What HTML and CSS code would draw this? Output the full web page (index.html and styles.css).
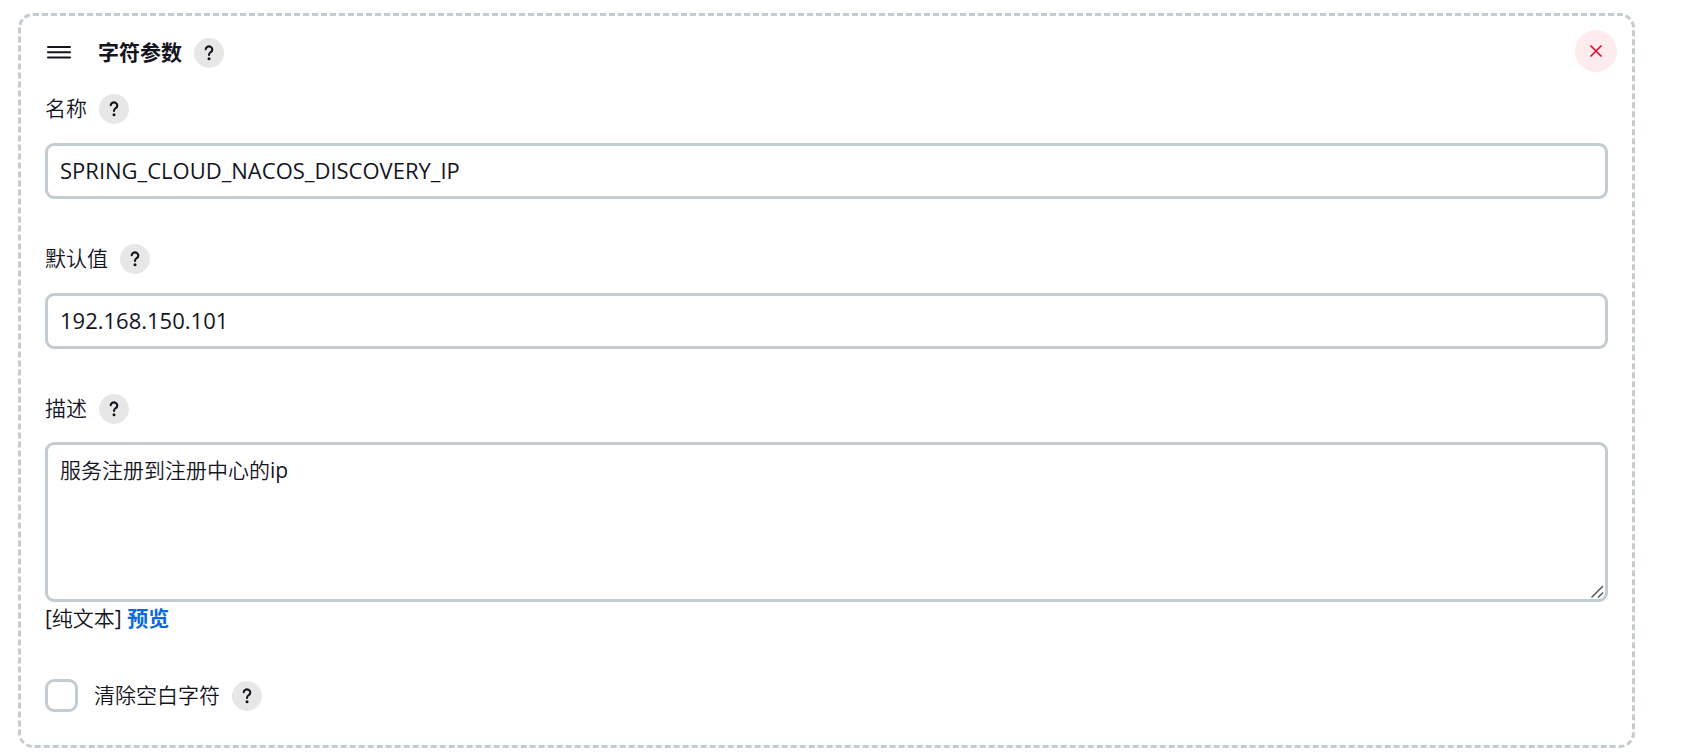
FILE: index.html
```html
<!DOCTYPE html>
<html lang="zh-CN">
<head>
    <meta charset="UTF-8">
    <meta name="viewport" content="width=device-width, initial-scale=1.0">
    <title>字符参数</title>
    <link rel="stylesheet" href="styles.css">
</head>
<body>
    <form class="parameter">
        <div class="parameter-header">
            <div class="parameter-title">
                <svg class="drag-handle" viewBox="0 0 24 14" aria-hidden="true">
                    <path d="M1 1h22M1 6.250h22M1 11.500h22" />
                </svg>
                <h2>字符参数</h2>
                <button type="button" class="help" aria-label="字符参数 帮助">
                    <svg viewBox="0 0 10 16" aria-hidden="true"><path d="M1.7 4.300a3.3 3 0 1 1 5 2.700C5.5 7.800 5 8.400 5 10" /><circle cx="5" cy="13.700" r="1.500" /></svg>
                </button>
            </div>
            <button type="button" class="delete" aria-label="删除">
                <svg viewBox="0 0 12 12" aria-hidden="true"><path d="M.5.5l11 11M11.500.5l-11 11" /></svg>
            </button>
        </div>

        <div class="field">
            <div class="field-label">
                <label for="name">名称</label>
                <button type="button" class="help" aria-label="名称 帮助">
                    <svg viewBox="0 0 10 16" aria-hidden="true"><path d="M1.7 4.300a3.3 3 0 1 1 5 2.700C5.5 7.800 5 8.400 5 10" /><circle cx="5" cy="13.700" r="1.500" /></svg>
                </button>
            </div>
            <input type="text" class="text-input" id="name" name="name" value="SPRING_CLOUD_NACOS_DISCOVERY_IP">
        </div>

        <div class="field">
            <div class="field-label">
                <label for="defaultValue">默认值</label>
                <button type="button" class="help" aria-label="默认值 帮助">
                    <svg viewBox="0 0 10 16" aria-hidden="true"><path d="M1.7 4.300a3.3 3 0 1 1 5 2.700C5.5 7.800 5 8.400 5 10" /><circle cx="5" cy="13.700" r="1.500" /></svg>
                </button>
            </div>
            <input type="text" class="text-input" id="defaultValue" name="defaultValue" value="192.168.150.101">
        </div>

        <div class="field description">
            <div class="field-label">
                <label for="description">描述</label>
                <button type="button" class="help" aria-label="描述 帮助">
                    <svg viewBox="0 0 10 16" aria-hidden="true"><path d="M1.7 4.300a3.3 3 0 1 1 5 2.700C5.5 7.800 5 8.400 5 10" /><circle cx="5" cy="13.700" r="1.500" /></svg>
                </button>
            </div>
            <textarea class="text-input" id="description" name="description" rows="4">服务注册到注册中心的ip</textarea>
            <div class="preview">[纯文本] <a href="#preview">预览</a></div>
        </div>

        <div class="check-row">
            <input type="checkbox" id="trim" name="trim">
            <label for="trim">清除空白字符</label>
            <button type="button" class="help" aria-label="清除空白字符 帮助">
                <svg viewBox="0 0 10 16" aria-hidden="true"><path d="M1.7 4.300a3.3 3 0 1 1 5 2.700C5.5 7.800 5 8.400 5 10" /><circle cx="5" cy="13.700" r="1.500" /></svg>
            </button>
        </div>
    </form>
</body>
</html>
```
FILE: styles.css
```css
* {
    box-sizing: border-box;
}
body {
    margin: 0;
    padding: 13px 58px 9px 18px;
    background-color: #fff;
    color: #14141f;
    font-family: "Open Sans", "Noto Sans CJK SC", sans-serif;
    font-size: 21px;
    line-height: 30px;
}
button {
    padding: 0;
    border: none;
    cursor: pointer;
}
label, h2 {
    padding-bottom: 2px;
    line-height: 28px;
}
label {
    font-weight: 350;
}
.parameter {
    padding: 14px 24px 33px;
    border: 3px dashed #c3ccd1;
    border-radius: 15px;
}
.parameter-header {
    display: flex;
    justify-content: space-between;
    align-items: flex-start;
    margin-right: -9px; /* delete button sits closer to the edge than the fields */
    margin-bottom: 22px;
}
.parameter-title {
    display: flex;
    align-items: center;
    padding-top: 8px;
}
.parameter-title h2 {
    margin: 0 12px 0 27px;
    font-size: 21px;
    font-weight: 700;
}
.drag-handle {
    width: 24px;
    height: 14px;
    margin-left: 2px;
    fill: none;
    stroke: #14141f;
    stroke-width: 2;
    stroke-linecap: round;
}
.help {
    display: flex;
    align-items: center;
    justify-content: center;
    flex: none;
    width: 30px;
    height: 30px;
    border-radius: 50%;
    background-color: #e7e7e7;
}
.help svg {
    width: 10px;
    height: 16px;
}
.help path {
    fill: none;
    stroke: #14141f;
    stroke-width: 2.1;
    stroke-linecap: round;
}
.help circle {
    fill: #14141f;
}
.delete {
    display: flex;
    align-items: center;
    justify-content: center;
    width: 42px;
    height: 42px;
    border-radius: 50%;
    background-color: #fdebed;
}
.delete svg {
    width: 12px;
    height: 12px;
    fill: none;
    stroke: #e6001f;
    stroke-width: 1.5;
    overflow: visible;
}
.field {
    margin-bottom: 45px;
}
.field-label {
    display: flex;
    align-items: center;
    gap: 12px;
    margin-bottom: 19px;
}
.description .field-label {
    margin-bottom: 18px;
}
.text-input {
    display: block;
    width: 100%;
    padding: 9px 12px 11px;
    border: 3px solid #c3ccd1;
    border-radius: 9px;
    background-color: #fff;
    color: #14141f;
    font: inherit;
}
input.text-input {
    font-size: 22px;
}
textarea.text-input {
    height: 160px;
    padding-top: 10px;
    font-family: "Open Sans", "Noto Sans CJK SC DemiLight", "Noto Sans CJK SC", sans-serif;
    resize: vertical;
}
textarea.text-input::-webkit-resizer {
    background: url("data:image/svg+xml,%3Csvg xmlns='http://www.w3.org/2000/svg' width='15' height='15'%3E%3Cpath d='M1.500 13.500 13 2M8 13.500 13 8.500' stroke='%23555' stroke-width='1.500'/%3E%3C/svg%3E") no-repeat;
}
.preview {
    padding-bottom: 1px;
    font-family: "Open Sans", "Noto Sans CJK SC DemiLight", "Noto Sans CJK SC", sans-serif;
}
.preview a {
    color: #0b6adb;
    font-family: "Noto Sans CJK SC", sans-serif;
    font-weight: 700;
    text-decoration: none;
}
.check-row {
    display: flex;
    align-items: center;
    gap: 12px;
}
.check-row input {
    appearance: none;
    width: 33px;
    height: 33px;
    margin: 0 4px 0 0;
    border: 3px solid #c3ccd1;
    border-radius: 9px;
    background-color: #fff;
}
.check-row input:checked {
    border-color: #0b6adb;
    background-color: #0b6adb;
}
```
